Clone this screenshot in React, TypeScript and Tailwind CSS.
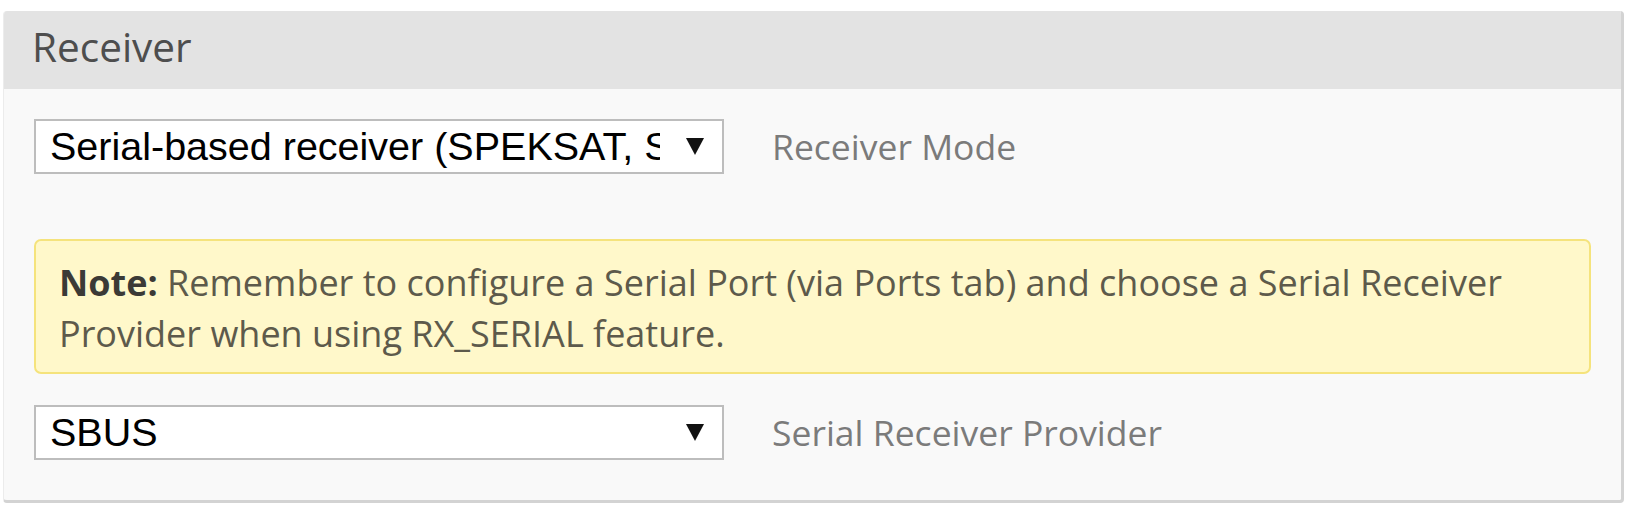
import React from 'react';

const openSans = { fontFamily: '"Open Sans", "Liberation Sans", sans-serif' };

const Arrow = () => (
  <svg width="18" height="17" viewBox="0 0 18 17" className="shrink-0">
    <polygon points="0,0 18,0 9,17" fill="#111" />
  </svg>
);

interface SelectBoxProps {
  value: string;
}

const SelectBox: React.FC<SelectBoxProps> = ({ value }) => (
  <div className="w-[690px] h-[55px] shrink-0 bg-white border-2 border-[#bdbdbd] flex items-center pl-[14px] pr-[18px]">
    <div
      className="flex-1 mr-[26px] overflow-hidden whitespace-nowrap text-[39.5px] leading-[51px] text-black"
      style={{ fontFamily: '"Liberation Sans", Arial, sans-serif' }}
    >
      {value}
    </div>
    <Arrow />
  </div>
);

const Row: React.FC<{ value: string; label: string }> = ({ value, label }) => (
  <div className="flex items-center">
    <SelectBox value={value} />
    <span className="ml-[48px] text-[35.5px] text-[#7b7b7b] whitespace-nowrap" style={openSans}>
      {label}
    </span>
  </div>
);

export default function App() {
  return (
    <div className="w-[1640px] h-[520px] bg-white pt-[11px] pl-[3px]">
      <div className="w-[1621px] rounded-[4px] border-r-[3px] border-b-[3px] border-l border-[#d3d3d3] border-l-[#ececec] bg-[#f9f9f9] overflow-hidden">
        <div className="h-[78px] bg-[#e3e3e3] pl-[28px] pb-[6px] flex items-center">
          <span className="text-[40.5px] text-[#4e4e4e]" style={openSans}>
            Receiver
          </span>
        </div>
        <div className="px-[30px] pt-[30px] pb-[40px]">
          <Row value="Serial-based receiver (SPEKSAT, SBUS, SUMD)" label="Receiver Mode" />

          <div
            className="mt-[65px] rounded-[7px] border-2 border-[#f5e37c] bg-[#fff8ca] pl-[23px] pr-[20px] pt-[16px] pb-[13px] text-[36px] leading-[51px] text-[#5d5a4b]"
            style={openSans}
          >
            <span className="font-bold text-[#3b3a36]">Note:</span> Remember to configure a Serial Port (via Ports tab) and choose a Serial Receiver Provider when using RX_SERIAL feature.
          </div>

          <div className="mt-[31px]">
            <Row value="SBUS" label="Serial Receiver Provider" />
          </div>
        </div>
      </div>
    </div>
  );
}
